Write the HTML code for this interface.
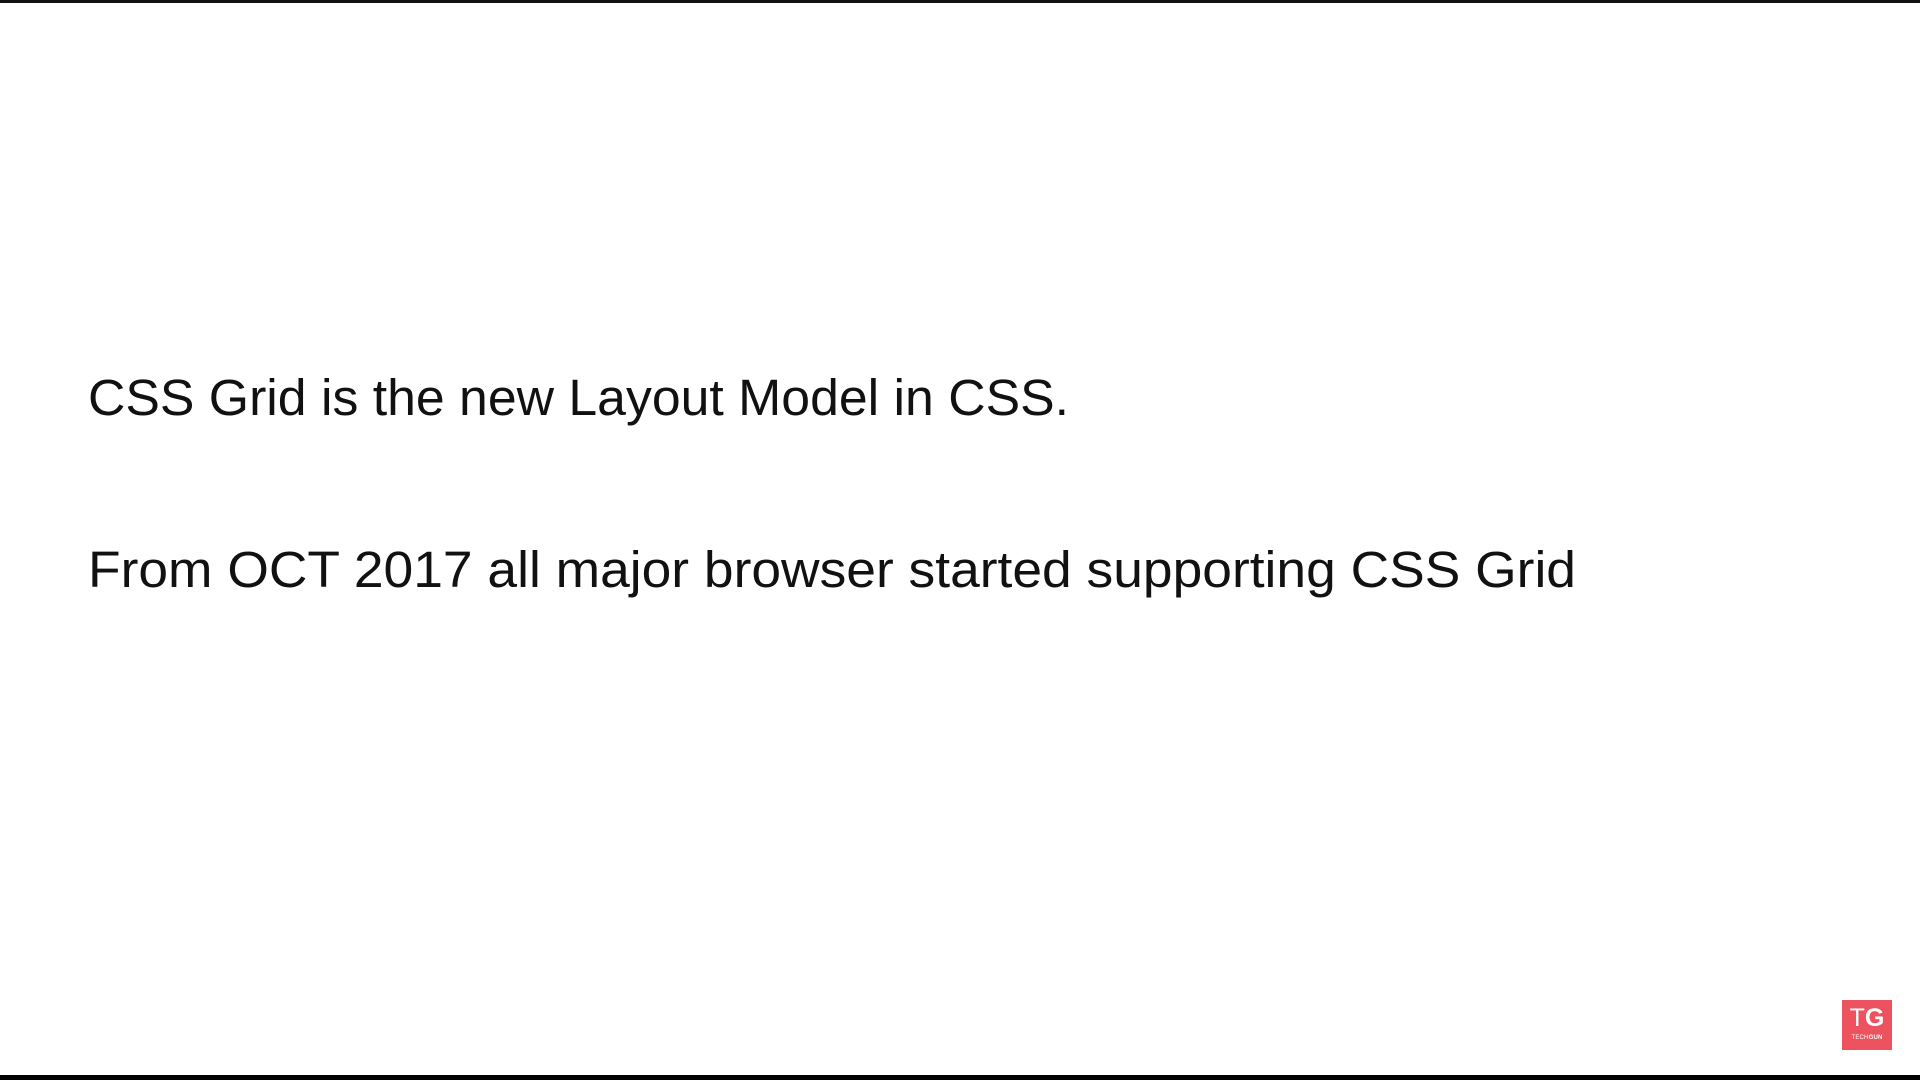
<!DOCTYPE html>
<html><head><meta charset="utf-8"><style>
html,body{margin:0;padding:0;width:1920px;height:1080px;overflow:hidden;background:#fff;}
.top{position:absolute;left:0;top:0;width:1920px;height:3px;background:#111;}
.bot{position:absolute;left:0;top:1075px;width:1920px;height:5px;background:#000;}
svg{position:absolute;left:0;top:0;}
.logo{position:absolute;left:1842px;top:1000px;width:50px;height:50px;background:#ec535f;color:#fff;font-family:"Liberation Sans",sans-serif;text-align:center;}
.logo .tg{position:absolute;left:0;right:0;top:6px;font-size:25px;line-height:25px;}
.logo .tg b{font-weight:bold}
.logo .sm{position:absolute;left:0;right:0;top:35px;font-size:6px;line-height:7px;letter-spacing:0.2px}
</style></head><body>
<div class="top"></div>
<svg width="1920" height="1080">
<text x="88" y="415" font-family="Liberation Sans, sans-serif" font-size="51" fill="#111" textLength="981" lengthAdjust="spacingAndGlyphs">CSS Grid is the new Layout Model in CSS.</text>
<text x="88" y="587" font-family="Liberation Sans, sans-serif" font-size="51" fill="#111" textLength="1488" lengthAdjust="spacingAndGlyphs">From OCT 2017 all major browser started supporting CSS Grid</text>
</svg>
<div class="logo"><div class="tg">T<b>G</b></div><div class="sm">TECH<b>GUN</b></div></div>
<div class="bot"></div>
</body></html>
